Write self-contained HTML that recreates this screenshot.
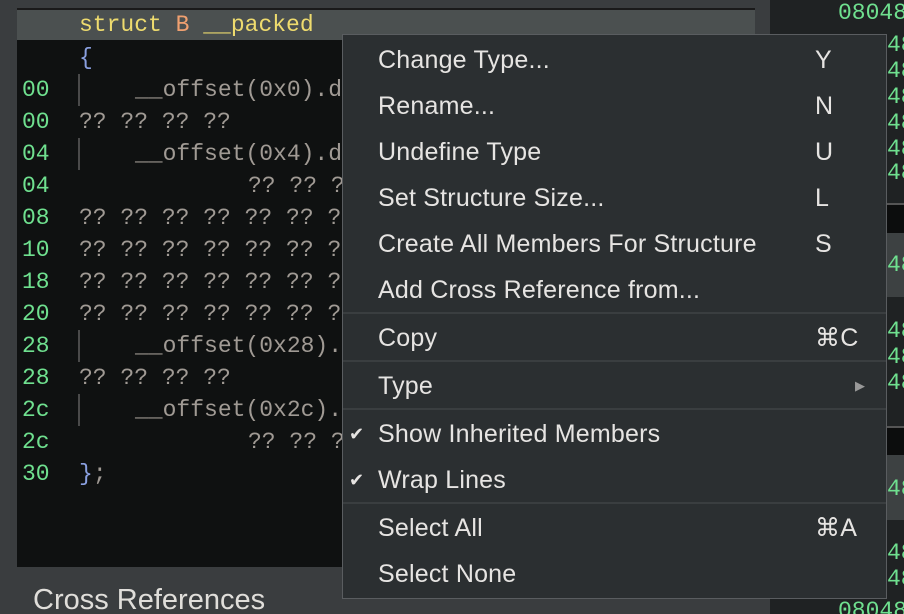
<!DOCTYPE html><html><head><style>
html,body{margin:0;width:904px;height:614px;overflow:hidden}
body{background:#3a3d3f;position:relative;font-family:"Liberation Mono",monospace}
.a{position:absolute}
.code{left:17px;top:8px;width:738px;height:557px;background:#0f1111;border-top:2px solid #1a1a1a}
.hdr{left:17px;top:10px;width:738px;height:30px;background:#4b5050}
.ln{position:absolute;left:22px;font-size:23px;color:#6fe08f;line-height:32px}
.tx{position:absolute;font-size:23px;color:#a09a94;line-height:32px;white-space:pre}
.bar{position:absolute;left:78px;width:2px;height:32px;background:#4a4a4a}
.rp{left:770px;top:0;width:134px;height:614px;background:#1f2223}
.g{position:absolute;left:887px;font-size:23px;color:#6fe08f;line-height:26px}
.menu{left:342px;top:34px;width:543px;height:563px;background:#2b2f31;border:1px solid #5a5d60;font-family:"Liberation Sans",sans-serif;color:#e6e4e2;font-size:25px;letter-spacing:0.2px}
.it{position:absolute;left:35px;line-height:46px;height:46px;white-space:nowrap}
.k{position:absolute;left:472px;line-height:46px}
.sep{position:absolute;left:0;width:543px;height:2px;background:#3a3e40}
.ck{position:absolute;left:6px;font-size:18px;line-height:46px}
</style></head><body>
<div class="a rp"></div>
<div class="a" style="left:838px;top:0;font-size:23px;color:#6fe08f;line-height:26px">08048</div>
<div class="a" style="left:887px;top:203px;width:17px;height:30px;background:#0c0d0d;border-top:2px solid #555"></div>
<div class="a" style="left:887px;top:233px;width:17px;height:64px;background:#3d4142"></div>
<div class="a" style="left:887px;top:426px;width:17px;height:29px;background:#0c0d0d;border-top:2px solid #555"></div>
<div class="a" style="left:887px;top:455px;width:17px;height:65px;background:#3d4142"></div>
<div class="g" style="top:32px">48</div><div class="g" style="top:58px">48</div><div class="g" style="top:84px">48</div><div class="g" style="top:110px">48</div><div class="g" style="top:136px">48</div><div class="g" style="top:160px">48</div>
<div class="g" style="top:252px">48</div>
<div class="g" style="top:318px">48</div><div class="g" style="top:344px">48</div><div class="g" style="top:370px">48</div>
<div class="g" style="top:476px">48</div>
<div class="g" style="top:540px">48</div><div class="g" style="top:566px">48</div>
<div class="a" style="left:838px;top:598px;font-size:23px;color:#6fe08f;line-height:26px">08048</div>
<div class="a code"></div>
<div class="a hdr"></div>
<div class="tx" style="left:79px;top:9px;color:#eedb6e">struct <span style="color:#f0a070">B</span> __packed</div>
<div class="tx" style="left:79px;top:42px;color:#8aa0e0">{</div>
<div class="ln" style="top:74px">00</div><div class="bar" style="top:74px"></div><div class="tx" style="left:135px;top:74px">__offset(0x0).d</div>
<div class="ln" style="top:106px">00</div><div class="tx" style="left:79px;top:106px">?? ?? ?? ??</div>
<div class="ln" style="top:138px">04</div><div class="bar" style="top:138px"></div><div class="tx" style="left:135px;top:138px">__offset(0x4).d</div>
<div class="ln" style="top:170px">04</div><div class="tx" style="left:248px;top:170px">?? ?? ?</div>
<div class="ln" style="top:202px">08</div><div class="tx" style="left:79px;top:202px">?? ?? ?? ?? ?? ?? ?</div>
<div class="ln" style="top:234px">10</div><div class="tx" style="left:79px;top:234px">?? ?? ?? ?? ?? ?? ?</div>
<div class="ln" style="top:266px">18</div><div class="tx" style="left:79px;top:266px">?? ?? ?? ?? ?? ?? ?</div>
<div class="ln" style="top:298px">20</div><div class="tx" style="left:79px;top:298px">?? ?? ?? ?? ?? ?? ?</div>
<div class="ln" style="top:330px">28</div><div class="bar" style="top:330px"></div><div class="tx" style="left:135px;top:330px">__offset(0x28).</div>
<div class="ln" style="top:362px">28</div><div class="tx" style="left:79px;top:362px">?? ?? ?? ??</div>
<div class="ln" style="top:394px">2c</div><div class="bar" style="top:394px"></div><div class="tx" style="left:135px;top:394px">__offset(0x2c).</div>
<div class="ln" style="top:426px">2c</div><div class="tx" style="left:248px;top:426px">?? ?? ?</div>
<div class="ln" style="top:458px">30</div><div class="tx" style="left:79px;top:458px"><span style="color:#8aa0e0">}</span>;</div>
<div class="a" style="left:33px;top:584px;font-family:'Liberation Sans',sans-serif;font-size:29px;color:#e0deda;white-space:nowrap">Cross References</div>
<div class="a menu">
<div class="it" style="top:2px">Change Type...</div><div class="k" style="top:2px">Y</div>
<div class="it" style="top:48px">Rename...</div><div class="k" style="top:48px">N</div>
<div class="it" style="top:94px">Undefine Type</div><div class="k" style="top:94px">U</div>
<div class="it" style="top:140px">Set Structure Size...</div><div class="k" style="top:140px">L</div>
<div class="it" style="top:186px">Create All Members For Structure</div><div class="k" style="top:186px">S</div>
<div class="it" style="top:232px">Add Cross Reference from...</div>
<div class="sep" style="top:277px"></div>
<div class="it" style="top:280px">Copy</div><div class="k" style="top:280px">⌘C</div>
<div class="sep" style="top:325px"></div>
<div class="it" style="top:328px">Type</div><div class="k" style="top:328px;left:512px;font-size:13px;color:#999">▶</div>
<div class="sep" style="top:373px"></div>
<div class="ck" style="top:376px">✔</div><div class="it" style="top:376px">Show Inherited Members</div>
<div class="ck" style="top:422px">✔</div><div class="it" style="top:422px">Wrap Lines</div>
<div class="sep" style="top:467px"></div>
<div class="it" style="top:470px">Select All</div><div class="k" style="top:470px">⌘A</div>
<div class="it" style="top:516px">Select None</div>
</div>
</body></html>
